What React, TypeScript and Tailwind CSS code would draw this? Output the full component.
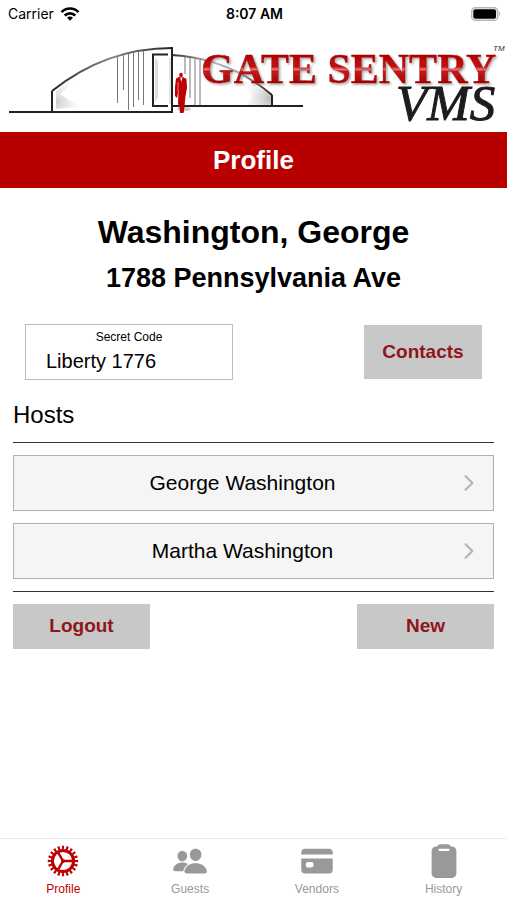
import { IoCard, IoChevronForward, IoClipboard, IoPeople } from 'react-icons/io5'

interface Host {
  id: number
  name: string
}

const hosts: Host[] = [
  { id: 1, name: 'George Washington' },
  { id: 2, name: 'Martha Washington' },
]

const tabs = [
  { label: 'Profile', icon: GearIcon, active: true },
  { label: 'Guests', icon: IoPeople, active: false },
  { label: 'Vendors', icon: IoCard, active: false },
  { label: 'History', icon: IoClipboard, active: false },
]

function GearIcon({ className }: { className?: string }) {
  return (
    <svg viewBox="0 0 36 36" className={className} fill="none" stroke="currentColor" aria-hidden="true">
      <circle cx="18" cy="18" r="10.6" strokeWidth="3" />
      {/* Teeth */}
      <circle cx="18" cy="18" r="13.2" strokeWidth="4" pathLength="40" strokeDasharray="1 1" strokeDashoffset="0.5" />
      {/* Spokes */}
      <path d="M18 18H28M18 18L13 9.4M18 18L13 26.6" strokeWidth="2.4" />
      <circle cx="18" cy="18" r="2" fill="currentColor" stroke="none" />
    </svg>
  )
}

function StatusBar() {
  return (
    <div className="grid h-7 grid-cols-3 items-center pr-1.5 pl-2 text-black">
      <div className="flex items-center gap-1.5 font-[Inter,sans-serif] text-sm">
        <span>Carrier</span>
        <svg viewBox="0 0 20 15" className="h-4 w-5" fill="none" stroke="black" strokeWidth="2.6" aria-hidden="true">
          <path d="M1.5 5.6A12 12 0 0 1 18.5 5.6" />
          <path d="M4.7 9A7.6 7.6 0 0 1 15.3 9" />
          <path d="M10 14.2L7 11.2A4.2 4.2 0 0 1 13 11.2Z" fill="black" stroke="none" />
        </svg>
      </div>
      <div className="text-center font-[Inter,sans-serif] text-sm font-semibold">8:07 AM</div>
      <svg viewBox="0 0 30 14" className="h-3.5 w-[30px] justify-self-end" aria-hidden="true">
        <rect x="0.7" y="0.7" width="26" height="12.6" rx="3.6" fill="white" stroke="#b5b5b5" strokeWidth="1.4" />
        <rect x="2.3" y="2.3" width="22.8" height="9.4" rx="2" fill="black" />
        <path d="M28 4.6C29.6 5.4 29.6 8.6 28 9.4Z" fill="#b5b5b5" />
      </svg>
    </div>
  )
}

function Logo() {
  return (
    <svg viewBox="0 28 507 104" className="block w-full" role="img" aria-label="Gate Sentry VMS">
      <defs>
        <linearGradient id="letters" x1="0" y1="55" x2="0" y2="84" gradientUnits="userSpaceOnUse">
          <stop offset="0" stopColor="#b00000" />
          <stop offset="0.4" stopColor="#c41010" />
          <stop offset="0.5" stopColor="#e07878" />
          <stop offset="0.56" stopColor="#c81818" />
          <stop offset="1" stopColor="#a00000" />
        </linearGradient>
        <linearGradient id="archLeft" x1="0" y1="0" x2="1" y2="0">
          <stop offset="0" stopColor="#222" />
          <stop offset="0.5" stopColor="#8a8a8a" />
          <stop offset="1" stopColor="#222" />
        </linearGradient>
        <linearGradient id="archRight" x1="0" y1="0" x2="1" y2="0">
          <stop offset="0" stopColor="#333" />
          <stop offset="0.4" stopColor="#bbb" />
          <stop offset="0.7" stopColor="#999" />
          <stop offset="1" stopColor="#222" />
        </linearGradient>
        <radialGradient id="shadeLeft" cx="56" cy="102" r="34" gradientUnits="userSpaceOnUse">
          <stop offset="0" stopColor="#ccc" />
          <stop offset="1" stopColor="#fff" stopOpacity="0" />
        </radialGradient>
        <radialGradient id="shadeRight" cx="270" cy="98" r="34" gradientUnits="userSpaceOnUse">
          <stop offset="0" stopColor="#bbb" />
          <stop offset="1" stopColor="#fff" stopOpacity="0" />
        </radialGradient>
        <filter id="letterShadow" x="-5%" y="-20%" width="110%" height="150%">
          <feDropShadow dx="1.5" dy="1.5" stdDeviation="0.8" floodColor="#666" floodOpacity="0.6" />
        </filter>
      </defs>

      {/* Gate house */}
      <path d="M56 91Q72 76 90 67L60 94L80 107L56 109Z" fill="url(#shadeLeft)" />
      <path d="M236 78Q256 84 271 95V105H246L252 96Z" fill="url(#shadeRight)" />
      <path d="M52 91Q106 48 172 48" fill="none" stroke="url(#archLeft)" strokeWidth="2" />
      <path d="M172 55Q228 58 272 95" fill="none" stroke="url(#archRight)" strokeWidth="2" />
      <path d="M9 112H172V47M52 91V111" fill="none" stroke="#222" strokeWidth="2" />
      <path d="M172 106H303M272 95V106" fill="none" stroke="#222" strokeWidth="2" />
      <path d="M168 54.500H153V106H168" fill="none" stroke="#222" strokeWidth="2" />
      <path d="M155 57L158 62V97L155 103Z" fill="#ddd" />
      <path d="M170 58V104" stroke="#ccc" fill="none" />
      <path
        d="M117.500 57V103M123.500 55V90M128.500 54V110M133.500 53V107M138.500 52V100M143.500 51V105M185 57V74M190 58V98M195 59V105M200 60V105"
        stroke="#777"
        fill="none"
      />

      {/* Guard */}
      <ellipse cx="184" cy="109" rx="7" ry="2" fill="#ccc" />
      <ellipse cx="181" cy="75" rx="1.8" ry="2.2" fill="#bd0000" />
      <path
        d="M179 77L176 78.500L175 87V96L177 98L178.500 90L178 104L179.500 107L180 113H183.500L184 111L185.500 96L187 88L186.500 79L183 77Z"
        fill="#bd0000"
      />
      <path d="M180.200 77.500L181.200 82L182.500 77.500Z" fill="#fff" />
      <path d="M178 82V92" stroke="#fff" strokeWidth="0.5" />

      <g filter="url(#letterShadow)">
        <text x="201" y="83" fontSize="42" fontWeight="bold" fill="url(#letters)" stroke="#a80000" strokeWidth="0.4" className="font-['Liberation_Serif',serif]">
          GATE SENTRY
        </text>
      </g>
      <text x="396" y="120" fontSize="51" fontStyle="italic" fill="#1c1c1c" stroke="#1c1c1c" className="font-['Liberation_Serif',serif]">
        VMS
      </text>
      <text x="493" y="51" fontSize="8" fontStyle="italic" fill="#333" className="font-['Liberation_Sans',sans-serif]">
        TM
      </text>
    </svg>
  )
}

export default function App() {
  return (
    <div className="flex min-h-screen flex-col bg-white font-['Liberation_Sans',Arial,sans-serif] text-black">
      <header>
        <StatusBar />
        <Logo />
        <h1 className="bg-[#b90000] py-2.5 text-center text-[26px] leading-9 font-bold text-white">Profile</h1>
      </header>

      <main className="flex-1 px-[13px]">
        <h2 className="mt-6 text-center text-[32px] leading-10 font-bold">Washington, George</h2>
        <p className="mt-2.5 text-center text-[27px] leading-8 font-bold">1788 Pennsylvania Ave</p>

        <div className="mt-7.5 flex items-center justify-between px-3">
          <div className="flex w-52 flex-col border border-[#bdbdbd] px-5 pt-1 pb-0.5">
            <label htmlFor="secret-code" className="text-center text-xs leading-4">
              Secret Code
            </label>
            <input
              id="secret-code"
              type="text"
              defaultValue="Liberty 1776"
              className="h-8 w-full text-xl outline-none"
            />
          </div>
          <button type="button" className="h-[54px] w-[118px] bg-[#c8c8c8] text-[19px] font-bold text-[#8f1519]">
            Contacts
          </button>
        </div>

        <h3 className="mt-4 border-b border-[#333] pb-2 text-2xl leading-[38px]">Hosts</h3>

        <div className="flex flex-col gap-3 border-b border-[#333] py-3">
          {hosts.map((host) => (
            <button
              key={host.id}
              type="button"
              className="flex h-14 items-center border border-[#b0b0b0] bg-[#f5f5f5] pr-3 text-[21px]"
            >
              <span className="flex-1 pl-3.5 text-center">{host.name}</span>
              <IoChevronForward className="size-6 text-[#b5b5b5]" />
            </button>
          ))}
        </div>

        <div className="mt-3 flex justify-between">
          <button type="button" className="h-[45px] w-[137px] bg-[#c8c8c8] text-[19px] font-bold text-[#8f1519]">
            Logout
          </button>
          <button type="button" className="h-[45px] w-[137px] bg-[#c8c8c8] text-[19px] font-bold text-[#8f1519]">
            New
          </button>
        </div>
      </main>

      <nav className="grid grid-cols-4 border-t border-[#ececec]">
        {tabs.map(({ label, icon: Icon, active }) => (
          <a
            key={label}
            href={`#${label.toLowerCase()}`}
            className={`flex flex-col items-center pt-1 pb-px ${active ? 'text-[#bd0000]' : 'text-[#999]'}`}
          >
            <Icon className="size-9" />
            <span className="text-xs leading-5">{label}</span>
          </a>
        ))}
      </nav>
    </div>
  )
}
